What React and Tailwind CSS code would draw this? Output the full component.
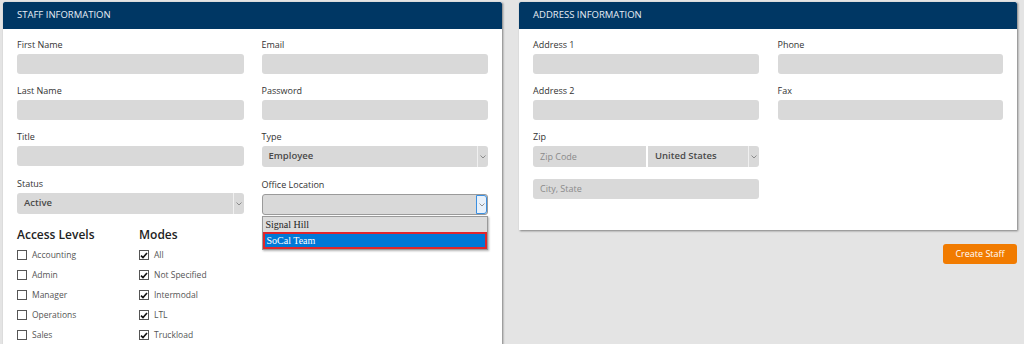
import React from "react";

const font = { fontFamily: '"Open Sans", "Noto Sans", sans-serif' };

function Label({ children }) {
  return <div className="text-[9px] leading-[12px] text-[#333] mb-[3px]">{children}</div>;
}

function Input({ placeholder, className = "" }) {
  return (
    <div className={`h-5 rounded-[3px] bg-[#d9d9d9] flex items-center px-[7px] text-[9px] text-[#8a8a8a] ${className}`}>
      {placeholder}
    </div>
  );
}

function Chevron() {
  return (
    <svg width="6" height="4" viewBox="0 0 6 4" fill="none">
      <path d="M0.5 0.5 L3 3 L5.5 0.5" stroke="#777" strokeWidth="0.8" />
    </svg>
  );
}

function Select({ value, focused, className = "" }) {
  return (
    <div className={`h-[21px] rounded-[3px] bg-[#d9d9d9] flex ${focused ? "border border-[#9a9a9a]" : ""} ${className}`}>
      <div className="flex-1 flex items-center px-[7px] text-[9.5px] font-semibold text-[#4a4a4a]">{value}</div>
      <div
        className={`w-[11px] flex items-center justify-center rounded-r-[3px] ${
          focused ? "border border-[#3b8fe0] bg-[#e8f1fb]" : "border-l border-[#f0f0f0]"
        }`}
      >
        <Chevron />
      </div>
    </div>
  );
}

function Field({ label, children, className = "mb-[11px]" }) {
  return (
    <div className={className}>
      <Label>{label}</Label>
      {children}
    </div>
  );
}

function Check({ checked, label }) {
  return (
    <div className="flex items-center gap-[5px] h-5">
      <div className="w-[10px] h-[10px] border border-[#555] bg-white flex items-center justify-center">
        {checked && (
          <svg width="8" height="7" viewBox="0 0 8 7">
            <path d="M1 3.6 L3 5.6 L7 1" stroke="#111" strokeWidth="1.6" fill="none" />
          </svg>
        )}
      </div>
      <span className="text-[8.5px] text-[#555]">{label}</span>
    </div>
  );
}

function PanelHeader({ children }) {
  return (
    <div className="h-[27px] bg-[#003764] flex items-center px-[14px] text-[9.5px] text-[#e6edf5] rounded-t-[2px]">
      {children}
    </div>
  );
}

export default function App() {
  return (
    <div className="w-[1024px] h-[344px] overflow-hidden bg-[#e4e4e4] flex gap-[17px] pl-[3px] pt-[2px]" style={font}>
      <div className="w-[499px] h-[400px] bg-white shadow-[1px_1px_2px_rgba(0,0,0,0.45)]">
        <PanelHeader>STAFF INFORMATION</PanelHeader>
        <div className="px-[14px] pt-[10px] grid grid-cols-2 gap-x-[18px]">
          <div>
            <Field label="First Name"><Input /></Field>
            <Field label="Last Name"><Input /></Field>
            <Field label="Title" className="mb-[12px]"><Input /></Field>
            <Field label="Status" className="mb-[12px]"><Select value="Active" /></Field>
            <div className="flex pt-[1px]">
              <div className="w-[122px]">
                <div className="text-[12px] font-semibold text-[#222] leading-[16px] mb-[2px]">Access Levels</div>
                <Check label="Accounting" />
                <Check label="Admin" />
                <Check label="Manager" />
                <Check label="Operations" />
                <Check label="Sales" />
              </div>
              <div>
                <div className="text-[12px] font-semibold text-[#222] leading-[16px] mb-[2px]">Modes</div>
                <Check checked label="All" />
                <Check checked label="Not Specified" />
                <Check checked label="Intermodal" />
                <Check checked label="LTL" />
                <Check checked label="Truckload" />
              </div>
            </div>
          </div>
          <div>
            <Field label="Email"><Input /></Field>
            <Field label="Password"><Input /></Field>
            <Field label="Type" className="mb-[12px]"><Select value="Employee" /></Field>
            <div className="relative">
              <Label>Office Location</Label>
              <Select value="" focused />
              <div className="absolute left-0 right-0 top-[37px] z-10 bg-white border border-[#9a9a9a] shadow-[1px_1px_2px_rgba(0,0,0,0.3)]" style={{ fontFamily: '"Liberation Serif", serif' }}>
                <div className="h-[15px] bg-[#dcdcdc] flex items-center px-[3px] text-[10px] text-[#222]">Signal Hill</div>
                <div className="h-[17px] bg-[#0078d7] border-2 border-[#e0262b] flex items-center px-[2px] text-[10px] text-white">SoCal Team</div>
              </div>
              <div className="pt-[20px]">
                <Check checked label={<span className="text-[9px] text-[#555]">Shipments created by customer</span>} />
              </div>
            </div>
          </div>
        </div>
      </div>
      <div className="flex flex-col items-end">
        <div className="w-[498px] h-[228px] bg-white shadow-[1px_1px_2px_rgba(0,0,0,0.45)]">
          <PanelHeader>ADDRESS INFORMATION</PanelHeader>
          <div className="px-[14px] pt-[10px] grid grid-cols-2 gap-x-[19px]">
            <div>
              <Field label="Address 1"><Input /></Field>
              <Field label="Address 2"><Input /></Field>
              <Field label="Zip">
                <div className="flex gap-[2px]">
                  <Input placeholder="Zip Code" className="w-[113px] h-[21px] rounded-r-none" />
                  <Select value="United States" className="flex-1 rounded-l-none" />
                </div>
                <Input placeholder="City, State" className="mt-[12px]" />
              </Field>
            </div>
            <div>
              <Field label="Phone"><Input /></Field>
              <Field label="Fax"><Input /></Field>
            </div>
          </div>
        </div>
        <button className="mt-[14px] h-[20px] w-[74px] rounded-[3px] bg-[#f17b00] text-white text-[9px]">Create Staff</button>
      </div>
    </div>
  );
}
